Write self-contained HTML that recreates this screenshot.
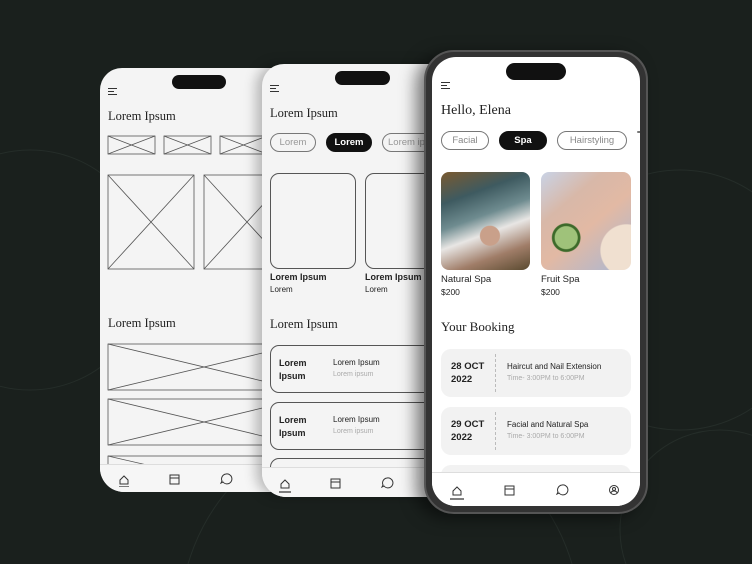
<!DOCTYPE html>
<html><head><meta charset="utf-8"><style>
*{margin:0;padding:0;box-sizing:border-box}
html,body{width:752px;height:564px;overflow:hidden}
body{background:#1a201d;position:relative;font-family:"Liberation Sans",sans-serif}
.a{position:absolute}
.serif{font-family:"Liberation Serif",serif;color:#222}
.scr{position:absolute;background:#f4f4f4;overflow:hidden}
.notch{position:absolute;background:#111;border-radius:8px}
.menu{position:absolute;width:9px;height:7px;border-top:1.3px solid #333;border-bottom:1.3px solid #333}
.menu:after{content:"";position:absolute;left:0;top:1.5px;width:6px;border-top:1.3px solid #333}
.chip{position:absolute;border:1px solid #777;border-radius:10px;font-size:9.5px;color:#999;text-align:center;line-height:17px;white-space:nowrap;overflow:hidden}
.chip.on{background:#111;color:#fff;border-color:#111;font-weight:bold}
.nav{position:absolute;left:0;right:0;bottom:0;border-top:1px solid #ddd;background:#f6f6f6}
.t{font-size:9px;color:#222}
</style></head><body>
<svg class="a" style="left:0;top:0" width="752" height="564"><g fill="none" stroke="#252d29" stroke-width="1">
<circle cx="680" cy="300" r="130"/><circle cx="30" cy="270" r="120"/><circle cx="380" cy="620" r="200"/><circle cx="720" cy="530" r="100"/></g></svg>

<!-- phone 1 -->
<div class="scr" style="left:100px;top:68px;width:200px;height:424px;border-radius:22px 0 0 24px">
<div class="notch" style="left:72px;top:7px;width:54px;height:14px"></div>
<div class="menu" style="left:8px;top:20px"></div>
<div class="a serif" style="left:8px;top:41px;font-size:12.5px">Lorem Ipsum</div>
<div class="a serif" style="left:8px;top:248px;font-size:12.5px">Lorem Ipsum</div>
<svg class="a" style="left:0;top:0" width="200" height="424"><g fill="none" stroke="#555" stroke-width="0.8">
<rect x="8" y="68" width="47" height="18"/><path d="M8 68L55 86M55 68L8 86"/>
<rect x="64" y="68" width="47" height="18"/><path d="M64 68L111 86M111 68L64 86"/>
<rect x="120" y="68" width="47" height="18"/><path d="M120 68L167 86M167 68L120 86"/>
<rect x="8" y="107" width="86" height="94"/><path d="M8 107L94 201M94 107L8 201"/>
<rect x="104" y="107" width="86" height="94"/><path d="M104 107L190 201M190 107L104 201"/>
<rect x="8" y="276" width="200" height="46"/><path d="M8 276L200 322M200 276L8 322"/>
<rect x="8" y="331" width="200" height="46"/><path d="M8 331L200 377M200 331L8 377"/>
<rect x="8" y="388" width="200" height="30"/><path d="M8 388L60 400"/></g></svg>
<div class="nav" style="height:28px">
<svg class="a" style="left:16px;top:6px" width="120" height="16"><g fill="none" stroke="#333" stroke-width="1"><path d="M4 9L8 5 12 9V13H4Z"/><path d="M3 16H13" stroke-width="1.3"/><rect x="54" y="4" width="9" height="9"/><path d="M54 7H63"/><path d="M110 3a5 5 0 1 1-3 8l-2 1 1-2a5 5 0 0 1 4-7z"/></g></svg></div>
</div>

<!-- phone 2 -->
<div class="scr" style="left:262px;top:64px;width:170px;height:433px;border-radius:22px 0 0 24px;box-shadow:-6px 0 12px rgba(0,0,0,.25)">
<div class="notch" style="left:73px;top:7px;width:55px;height:14px"></div>
<div class="menu" style="left:8px;top:21px"></div>
<div class="a serif" style="left:8px;top:42px;font-size:12.5px">Lorem Ipsum</div>
<div class="chip" style="left:8px;top:69px;width:46px">Lorem</div>
<div class="chip on" style="left:64px;top:69px;width:46px">Lorem</div>
<div class="chip" style="left:120px;top:69px;width:60px;text-align:left;padding-left:5px">Lorem ipsum</div>
<div class="a" style="left:8px;top:109px;width:86px;height:96px;border:1px solid #555;border-radius:9px"></div>
<div class="a" style="left:103px;top:109px;width:86px;height:96px;border:1px solid #555;border-radius:9px"></div>
<div class="a t" style="left:8px;top:208px;font-weight:bold;font-size:9px">Lorem Ipsum</div>
<div class="a t" style="left:8px;top:221px;font-size:8px">Lorem</div>
<div class="a t" style="left:103px;top:208px;font-weight:bold;font-size:9px">Lorem Ipsum</div>
<div class="a t" style="left:103px;top:221px;font-size:8px">Lorem</div>
<div class="a serif" style="left:8px;top:253px;font-size:12.5px">Lorem Ipsum</div>
<div class="a" style="left:8px;top:281px;width:170px;height:48px;border:1px solid #555;border-radius:9px"></div>
<div class="a t" style="left:17px;top:293px;font-weight:bold;line-height:13px">Lorem<br>Ipsum</div>
<div class="a t" style="left:71px;top:294px;font-size:8px">Lorem Ipsum</div>
<div class="a" style="left:71px;top:307px;font-size:7px;color:#aaa">Lorem ipsum</div>
<div class="a" style="left:8px;top:338px;width:170px;height:48px;border:1px solid #555;border-radius:9px"></div>
<div class="a t" style="left:17px;top:350px;font-weight:bold;line-height:13px">Lorem<br>Ipsum</div>
<div class="a t" style="left:71px;top:351px;font-size:8px">Lorem Ipsum</div>
<div class="a" style="left:71px;top:364px;font-size:7px;color:#aaa">Lorem ipsum</div>
<div class="a" style="left:8px;top:394px;width:170px;height:48px;border:1px solid #555;border-radius:9px"></div>
<div class="nav" style="height:30px">
<svg class="a" style="left:15px;top:7px" width="120" height="18"><g fill="none" stroke="#333" stroke-width="1"><path d="M4 9L8 5 12 9V13H4Z"/><path d="M2 17H14" stroke-width="1.3"/><rect x="54" y="4" width="9" height="9"/><path d="M54 7H63"/><path d="M110 3a5 5 0 1 1-3 8l-2 1 1-2a5 5 0 0 1 4-7z"/></g></svg></div>
</div>

<!-- phone 3 -->
<div class="a" style="left:424px;top:50px;width:224px;height:464px;background:#333;border-radius:30px;border:2px solid #555;box-shadow:-8px 4px 16px rgba(0,0,0,.5)"></div>
<div class="scr" style="left:432px;top:57px;width:208px;height:449px;border-radius:24px;background:#fff">
<div class="notch" style="left:74px;top:6px;width:60px;height:17px;border-radius:9px"></div>
<div class="menu" style="left:9px;top:25px"></div>
<div class="a serif" style="left:9px;top:46px;font-size:14px">Hello, Elena</div>
<div class="chip" style="left:9px;top:74px;width:48px;color:#888">Facial</div>
<div class="chip on" style="left:67px;top:74px;width:48px">Spa</div>
<div class="chip" style="left:125px;top:74px;width:70px;color:#888">Hairstyling</div>
<div class="chip" style="left:205px;top:74px;width:30px"></div>
<div class="a" style="left:9px;top:115px;width:89px;height:98px;border-radius:8px;background:radial-gradient(circle at 55% 65%,#c9a08a 0 12%,transparent 13%),linear-gradient(160deg,#7a5a30 0,#3e5a60 25%,#6f8c90 45%,#e8e6e4 60%,#a07d68 80%,#5a4a30 100%)"></div>
<div class="a" style="left:109px;top:115px;width:90px;height:98px;border-radius:8px;background:radial-gradient(circle at 28% 67%,#9fc27a 0 12%,#3d6a2a 13% 15%,transparent 16%),radial-gradient(circle at 95% 80%,#f0e0d0 0 22%,transparent 23%),linear-gradient(140deg,#c9d3e6 0,#d8b8a8 30%,#e2b9a4 55%,#a9b8d4 100%)"></div>
<div class="a t" style="left:9px;top:217px;font-size:9.5px">Natural Spa</div>
<div class="a t" style="left:9px;top:230px;font-size:8.5px">$200</div>
<div class="a t" style="left:109px;top:217px;font-size:9.5px">Fruit Spa</div>
<div class="a t" style="left:109px;top:230px;font-size:8.5px">$200</div>
<div class="a serif" style="left:9px;top:262px;font-size:13px">Your Booking</div>
<div class="a" style="left:9px;top:292px;width:190px;height:48px;background:#f2f2f2;border-radius:10px">
<div class="a t" style="left:10px;top:11px;font-weight:bold;font-size:9.5px;line-height:13px">28 OCT<br>2022</div>
<div class="a" style="left:54px;top:5px;height:38px;border-left:1px dashed #bbb"></div>
<div class="a t" style="left:66px;top:13px;font-size:8px">Haircut and Nail Extension</div>
<div class="a" style="left:66px;top:26px;font-size:7px;color:#aaa">Time- 3:00PM to 6:00PM</div></div>
<div class="a" style="left:9px;top:350px;width:190px;height:48px;background:#f2f2f2;border-radius:10px">
<div class="a t" style="left:10px;top:11px;font-weight:bold;font-size:9.5px;line-height:13px">29 OCT<br>2022</div>
<div class="a" style="left:54px;top:5px;height:38px;border-left:1px dashed #bbb"></div>
<div class="a t" style="left:66px;top:13px;font-size:8px">Facial and Natural Spa</div>
<div class="a" style="left:66px;top:26px;font-size:7px;color:#aaa">Time- 3:00PM to 6:00PM</div></div>
<div class="a" style="left:9px;top:408px;width:190px;height:48px;background:#f2f2f2;border-radius:10px"></div>
<div class="nav" style="height:34px;background:#fff">
<svg class="a" style="left:17px;top:9px" width="180" height="18"><g fill="none" stroke="#333" stroke-width="1"><path d="M4 9L8 5 12 9V13H4Z"/><path d="M1 17H15" stroke-width="1.3"/><rect x="56" y="4" width="9" height="9"/><path d="M56 7H65"/><path d="M113 3a5 5 0 1 1-3 8l-2 1 1-2a5 5 0 0 1 4-7z"/><circle cx="165" cy="8" r="4.5"/><circle cx="165" cy="7" r="1.5"/><path d="M162 11a3 2 0 0 1 6 0"/></g></svg></div>
</div>
</body></html>
